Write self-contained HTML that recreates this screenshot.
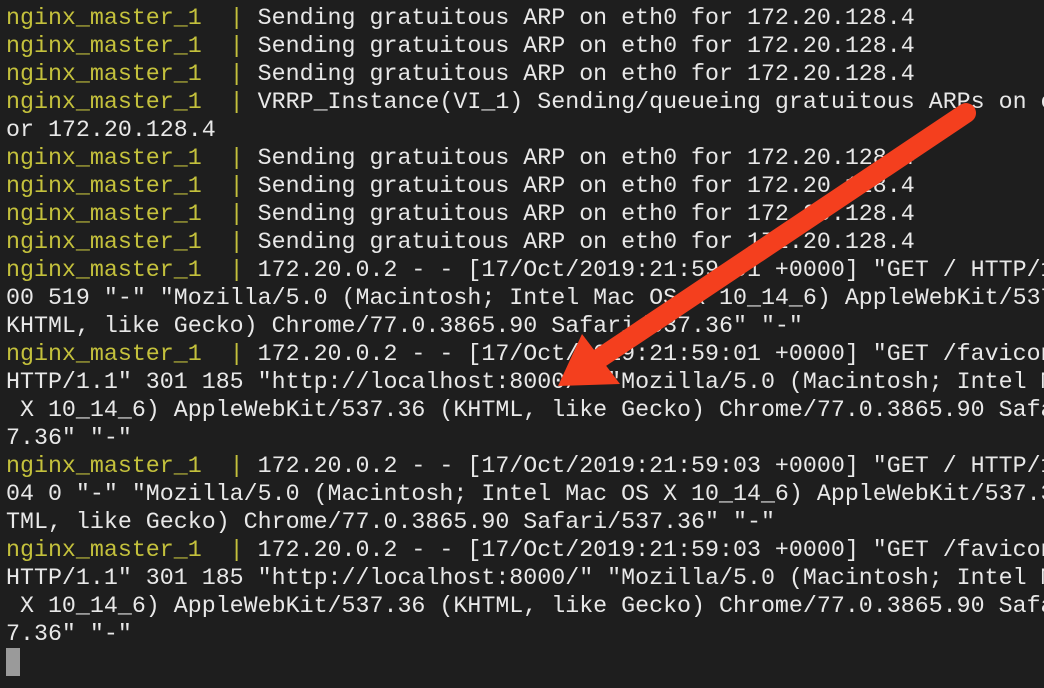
<!DOCTYPE html>
<html><head><meta charset="utf-8"><style>
html,body{margin:0;padding:0;background:#1e1e1e;width:1044px;height:688px;overflow:hidden}
pre{margin:0;position:absolute;left:6px;top:4px;font-family:"Liberation Mono",monospace;font-size:23.3px;line-height:28px;color:#e8e8e8;white-space:pre}
.y{color:#c4c13c}
.cur{position:absolute;left:6px;top:648px;width:14px;height:28px;background:#9a9a9a}
</style></head><body>
<pre><span class="y">nginx_master_1  |</span> Sending gratuitous ARP on eth0 for 172.20.128.4
<span class="y">nginx_master_1  |</span> Sending gratuitous ARP on eth0 for 172.20.128.4
<span class="y">nginx_master_1  |</span> Sending gratuitous ARP on eth0 for 172.20.128.4
<span class="y">nginx_master_1  |</span> VRRP_Instance(VI_1) Sending/queueing gratuitous ARPs on e
or 172.20.128.4
<span class="y">nginx_master_1  |</span> Sending gratuitous ARP on eth0 for 172.20.128.4
<span class="y">nginx_master_1  |</span> Sending gratuitous ARP on eth0 for 172.20.128.4
<span class="y">nginx_master_1  |</span> Sending gratuitous ARP on eth0 for 172.20.128.4
<span class="y">nginx_master_1  |</span> Sending gratuitous ARP on eth0 for 172.20.128.4
<span class="y">nginx_master_1  |</span> 172.20.0.2 - - [17/Oct/2019:21:59:01 +0000] "GET / HTTP/1
00 519 "-" "Mozilla/5.0 (Macintosh; Intel Mac OS X 10_14_6) AppleWebKit/537
KHTML, like Gecko) Chrome/77.0.3865.90 Safari/537.36" "-"
<span class="y">nginx_master_1  |</span> 172.20.0.2 - - [17/Oct/2019:21:59:01 +0000] "GET /favicon
HTTP/1.1" 301 185 "http://localhost:8000/" "Mozilla/5.0 (Macintosh; Intel M
 X 10_14_6) AppleWebKit/537.36 (KHTML, like Gecko) Chrome/77.0.3865.90 Safar
7.36" "-"
<span class="y">nginx_master_1  |</span> 172.20.0.2 - - [17/Oct/2019:21:59:03 +0000] "GET / HTTP/1
04 0 "-" "Mozilla/5.0 (Macintosh; Intel Mac OS X 10_14_6) AppleWebKit/537.3
TML, like Gecko) Chrome/77.0.3865.90 Safari/537.36" "-"
<span class="y">nginx_master_1  |</span> 172.20.0.2 - - [17/Oct/2019:21:59:03 +0000] "GET /favicon
HTTP/1.1" 301 185 "http://localhost:8000/" "Mozilla/5.0 (Macintosh; Intel M
 X 10_14_6) AppleWebKit/537.36 (KHTML, like Gecko) Chrome/77.0.3865.90 Safar
7.36" "-"</pre>
<div class="cur"></div>
<svg width="1044" height="688" style="position:absolute;left:0;top:0">
<line x1="966" y1="113" x2="600" y2="358" stroke="#f43f1e" stroke-width="20" stroke-linecap="round"/>
<polygon points="558,386 582,334 620,384" fill="#f43f1e"/>
</svg>
</body></html>
